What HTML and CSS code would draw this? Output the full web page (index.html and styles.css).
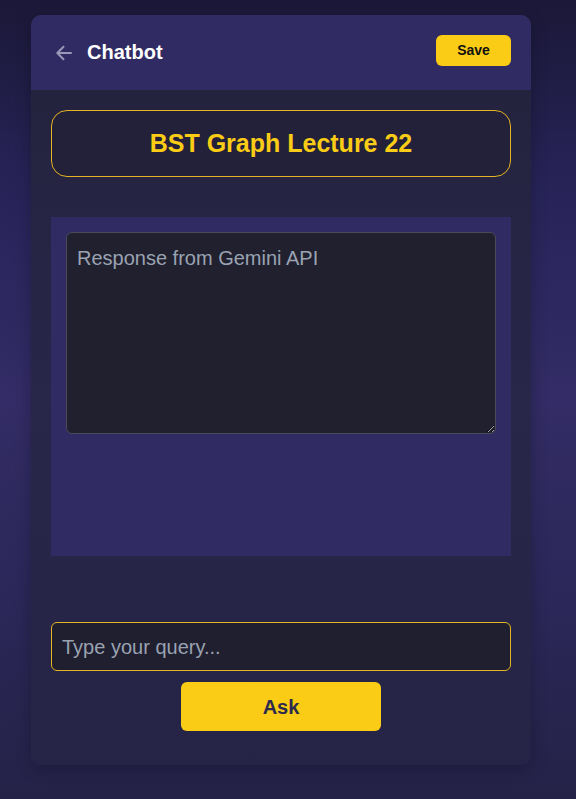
FILE: index.html
```html
<!DOCTYPE html>
<html>
<head>
<meta charset="utf-8">
<link rel="stylesheet" href="styles.css">
</head>
<body>
<div class="page">
  <div class="card">
    <header class="topbar">
      <div class="left">
        <svg class="back" width="20" height="20" viewBox="0 0 20 20" fill="none" stroke="#9a98b8" stroke-width="2" stroke-linecap="round" stroke-linejoin="round"><path d="M17 10H3.5M9.5 3.8L3.3 10l6.2 6.2"/></svg>
        <span class="brand">Chatbot</span>
      </div>
      <button class="save">Save</button>
    </header>
    <main class="body">
      <div class="title-box">BST Graph Lecture 22</div>
      <div class="panel">
        <textarea class="response" placeholder="Response from Gemini API"></textarea>
      </div>
      <div class="ask-area">
        <input class="query" type="text" placeholder="Type your query...">
        <button class="ask">Ask</button>
      </div>
    </main>
  </div>
</div>
</body>
</html>
```
FILE: styles.css
```css
* { box-sizing: border-box; }
html, body { margin: 0; padding: 0; }
body {
  min-height: 799px;
  background: linear-gradient(180deg, #1b1838 0%, #28245a 25%, #332c66 50%, #2b2758 75%, #252248 100%);
  font-family: "Liberation Sans", Arial, sans-serif;
}
.page {
  padding: 15px 0 34px 31px;
}
.card {
  width: 500px;
  border-radius: 10px;
  overflow: hidden;
  box-shadow: 0 4px 16px rgba(0,0,0,0.25);
  background: linear-gradient(180deg, #23223b 0%, #282649 50%, #262446 100%);
}
.topbar {
  height: 75px;
  background: #312b63;
  display: flex;
  align-items: center;
  justify-content: space-between;
  padding: 0 20px 0 23px;
}
.left { display: flex; align-items: center; gap: 13px; }
.back { display: block; }
.brand { color: #fff; font-weight: 700; font-size: 20px; }
.save {
  background: #facc15;
  border: none;
  border-radius: 6px;
  width: 75px;
  height: 31px;
  padding-top: 1px;
  font-family: "Liberation Sans", Arial, sans-serif;
  font-weight: 700;
  font-size: 14px;
  color: #111;
  margin-top: -5px;
}
.body {
  padding: 20px 20px 34px;
  display: flex;
  flex-direction: column;
}
.title-box {
  height: 67px;
  border: 1px solid #e5b323;
  border-radius: 16px;
  background: #222139;
  display: flex;
  align-items: center;
  justify-content: center;
  color: #facc15;
  font-weight: 700;
  font-size: 25px;
}
.panel {
  margin-top: 40px;
  height: 339px;
  background: #312b63;
  padding: 15px;
}
.response {
  display: block;
  width: 100%;
  height: 202px;
  background: #20202e;
  border: 1px solid #4a4a58;
  border-radius: 6px;
  padding: 14px 10px;
  font-family: "Liberation Sans", Arial, sans-serif;
  font-size: 20px;
  color: #d1d5db;
  resize: vertical;
  outline: none;
}
.response::placeholder { color: #9aa3b2; }
.ask-area {
  margin-top: 66px;
  display: flex;
  flex-direction: column;
  align-items: center;
  gap: 11px;
}
.query {
  width: 100%;
  height: 49px;
  background: #201f30;
  border: 1px solid #e5b323;
  border-radius: 6px;
  padding: 2px 10px 0;
  font-family: "Liberation Sans", Arial, sans-serif;
  font-size: 20px;
  color: #d1d5db;
  outline: none;
}
.query::placeholder { color: #9aa3b2; }
.ask {
  width: 200px;
  height: 49px;
  padding-top: 2px;
  background: #facc15;
  border: none;
  border-radius: 6px;
  font-family: "Liberation Sans", Arial, sans-serif;
  font-weight: 700;
  font-size: 20px;
  color: #2d2a4e;
}
```
